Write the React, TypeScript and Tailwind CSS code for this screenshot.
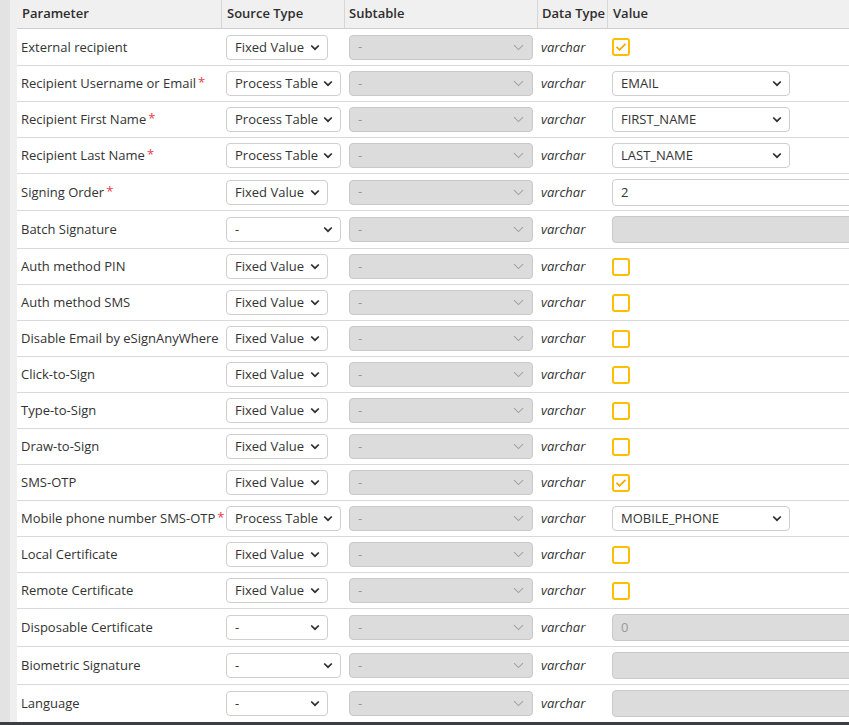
import React from "react";

type Src = { label: string; w: number };
type Val =
  | { kind: "check"; checked: boolean }
  | { kind: "select"; text: string }
  | { kind: "input"; text: string; disabled: boolean };

type Row = { name: string; req?: boolean; src: Src; val: Val; h: number };

const FV: Src = { label: "Fixed Value", w: 102 };
const PT: Src = { label: "Process Table", w: 115 };
const DS: Src = { label: "-", w: 102 };
const DL: Src = { label: "-", w: 115 };

const rows: Row[] = [
  { name: "External recipient", src: FV, val: { kind: "check", checked: true }, h: 37 },
  { name: "Recipient Username or Email", req: true, src: PT, val: { kind: "select", text: "EMAIL" }, h: 36 },
  { name: "Recipient First Name", req: true, src: PT, val: { kind: "select", text: "FIRST_NAME" }, h: 36 },
  { name: "Recipient Last Name", req: true, src: PT, val: { kind: "select", text: "LAST_NAME" }, h: 36 },
  { name: "Signing Order", req: true, src: FV, val: { kind: "input", text: "2", disabled: false }, h: 37 },
  { name: "Batch Signature", src: DL, val: { kind: "input", text: "", disabled: true }, h: 38 },
  { name: "Auth method PIN", src: FV, val: { kind: "check", checked: false }, h: 36 },
  { name: "Auth method SMS", src: FV, val: { kind: "check", checked: false }, h: 36 },
  { name: "Disable Email by eSignAnyWhere", src: FV, val: { kind: "check", checked: false }, h: 36 },
  { name: "Click-to-Sign", src: FV, val: { kind: "check", checked: false }, h: 36 },
  { name: "Type-to-Sign", src: FV, val: { kind: "check", checked: false }, h: 36 },
  { name: "Draw-to-Sign", src: FV, val: { kind: "check", checked: false }, h: 36 },
  { name: "SMS-OTP", src: FV, val: { kind: "check", checked: true }, h: 36 },
  { name: "Mobile phone number SMS-OTP", req: true, src: PT, val: { kind: "select", text: "MOBILE_PHONE" }, h: 36 },
  { name: "Local Certificate", src: FV, val: { kind: "check", checked: false }, h: 36 },
  { name: "Remote Certificate", src: FV, val: { kind: "check", checked: false }, h: 36 },
  { name: "Disposable Certificate", src: DS, val: { kind: "input", text: "0", disabled: true }, h: 38 },
  { name: "Biometric Signature", src: DL, val: { kind: "input", text: "", disabled: true }, h: 38 },
  { name: "Language", src: DS, val: { kind: "input", text: "", disabled: true }, h: 38 },
];

function Chevron({ disabled }: { disabled?: boolean }) {
  return disabled ? (
    <svg width="11" height="7" viewBox="0 0 11 7" className="shrink-0">
      <path d="M1 1.2 L5.5 5.6 L10 1.2" fill="none" stroke="#a3a3a3" strokeWidth="1.1" />
    </svg>
  ) : (
    <svg width="10" height="7" viewBox="0 0 10 7" className="shrink-0">
      <path d="M1.2 1.5 L5 5.2 L8.8 1.5" fill="none" stroke="#2e2e2e" strokeWidth="1.7" />
    </svg>
  );
}

function FakeSelect({ text, width }: { text: string; width: number }) {
  return (
    <div
      className="h-[25px] flex items-center justify-between pl-[8px] pr-[7px] bg-white border border-[#cfcfcf] rounded-[4px] text-[13px] text-[#333]"
      style={{ width }}
    >
      <span className="truncate pt-[1px]">{text}</span>
      <Chevron />
    </div>
  );
}

function Check({ checked }: { checked: boolean }) {
  return (
    <div className="w-[18px] h-[18px] border-2 border-[#ffbd00] rounded-[3px] flex items-center justify-center bg-white">
      {checked && (
        <svg width="12" height="10" viewBox="0 0 12 10">
          <path d="M1.5 4.8 L4.6 7.8 L10.5 1.8" fill="none" stroke="#f5a800" strokeWidth="1.8" />
        </svg>
      )}
    </div>
  );
}

export default function App() {
  return (
    <div
      className="w-[849px] h-[725px] overflow-hidden bg-white flex flex-col"
      style={{ fontFamily: '"Open Sans", "Noto Sans", sans-serif' }}
    >
      <div className="flex flex-1 min-h-0">
        <div className="w-[10px] shrink-0 bg-[#e3e3e3]" />
        <div className="w-[7px] shrink-0 bg-[#efefef]" />
        <div className="flex-1 min-w-0 overflow-hidden">
          <div className="w-[900px]">
            <div className="grid grid-cols-[205px_123px_193px_70px_309px] h-[29px] bg-[#f0f0f0] border-b border-[#cdcdcd] text-[13px] font-semibold text-[#2d2d2d]">
              <div className="flex items-center pl-[5px] border-r border-[#d6d6d6]">Parameter</div>
              <div className="flex items-center pl-[5px] border-r border-[#d6d6d6]">Source Type</div>
              <div className="flex items-center pl-[4px] border-r border-[#d6d6d6]">Subtable</div>
              <div className="flex items-center pl-[4px] border-r border-[#d6d6d6]">Data Type</div>
              <div className="flex items-center pl-[5px]">Value</div>
            </div>
            {rows.map((r) => (
              <div
                key={r.name}
                className="grid grid-cols-[205px_123px_193px_70px_309px] border-b border-[#d9d9d9] text-[13px] text-[#333]"
                style={{ height: r.h }}
              >
                <div className="flex items-center pl-[4px] pt-[1px] whitespace-nowrap">
                  <span>{r.name}</span>
                  {r.req && <span className="text-[#e8394a] ml-[2px] relative top-[-1px]">*</span>}
                </div>
                <div className="flex items-center pl-[4px]">
                  <FakeSelect text={r.src.label} width={r.src.w} />
                </div>
                <div className="flex items-center pl-[4px]">
                  <div className="w-[184px] h-[25px] flex items-center justify-between pl-[8px] pr-[8px] bg-[#dcdcdc] border border-[#c9c9c9] rounded-[4px] text-[13px] text-[#9a9a9a]">
                    <span>-</span>
                    <Chevron disabled />
                  </div>
                </div>
                <div className="flex items-center pl-[3px] pt-[1px] italic text-[#333]">varchar</div>
                <div className="flex items-center pl-[4px]">
                  {r.val.kind === "check" && <Check checked={r.val.checked} />}
                  {r.val.kind === "select" && <FakeSelect text={r.val.text} width={178} />}
                  {r.val.kind === "input" && (
                    <div
                      className={
                        r.val.disabled
                          ? "w-[300px] h-[27px] flex items-center pl-[8px] pt-[1px] bg-[#dcdcdc] border border-[#c9c9c9] rounded-[4px] text-[#9a9a9a]"
                          : "w-[300px] h-[27px] flex items-center pl-[8px] pt-[1px] bg-white border border-[#cfcfcf] rounded-[4px] text-[#333]"
                      }
                    >
                      {r.val.text}
                    </div>
                  )}
                </div>
              </div>
            ))}
          </div>
        </div>
      </div>
      <div className="h-[3px] shrink-0 bg-[#3b3e42]" />
    </div>
  );
}
